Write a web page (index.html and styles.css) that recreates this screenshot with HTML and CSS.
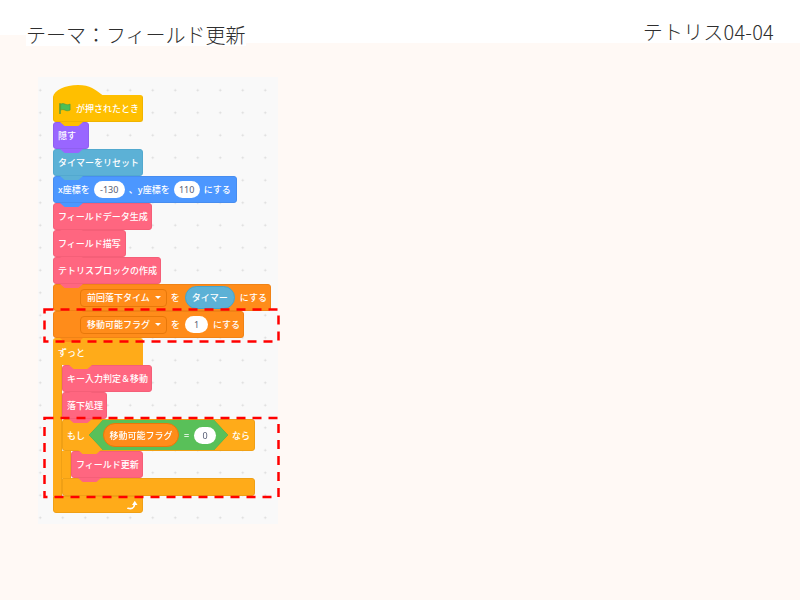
FILE: index.html
```html
<!DOCTYPE html>
<html lang="ja">
<head>
    <meta charset="UTF-8">
    <meta name="viewport" content="width=device-width, initial-scale=1.0">
    <title>テトリス04-04</title>
    <link rel="stylesheet" href="styles.css">
</head>
<body>
    <header class="header">
        <div class="header-notch"></div>
        <h1 class="title">テーマ：フィールド更新</h1>
        <div class="page-no">テトリス04-04</div>
    </header>

    <main class="main">
        <div class="workspace">
            <div class="stack">
                <div class="block hat w-90">
                    <svg class="flag" viewBox="0 0 12 11" width="12" height="11">
                        <path d="M1 .8v9.700" stroke="#45993d" stroke-width="1.400" stroke-linecap="round"/>
                        <path d="M1.600 1.200c1.800-1 3.200-.6 4.600 0s2.800.8 4.900-.1v6c-2 1-3.500.7-4.900.1s-2.800-1-4.600-.1z" fill="#4cbf56" stroke="#45993d" stroke-width=".6"/>
                    </svg>
                    <span>が押されたとき</span>
                </div>
                <div class="block looks w-36"><span>隠す</span></div>
                <div class="block sensing w-90"><span>タイマーをリセット</span></div>
                <div class="block motion w-184">
                    <span>x座標を</span>
                    <span class="num num-wide">-130</span>
                    <span>、y座標を</span>
                    <span class="num num-mid">110</span>
                    <span>にする</span>
                </div>
                <div class="block custom w-99"><span>フィールドデータ生成</span></div>
                <div class="block custom w-73"><span>フィールド描写</span></div>
                <div class="block custom w-108"><span>テトリスブロックの作成</span></div>
                <div class="block variable w-218">
                    <span class="dropdown">前回落下タイム</span>
                    <span>を</span>
                    <span class="reporter reporter-blue">タイマー</span>
                    <span>にする</span>
                </div>
                <div class="block variable w-191">
                    <span class="dropdown">移動可能フラグ</span>
                    <span>を</span>
                    <span class="num num-one">1</span>
                    <span>にする</span>
                </div>

                <div class="c-block control">
                    <div class="c-head w-90"><span>ずっと</span></div>
                    <div class="c-body">
                        <div class="c-arm"></div>
                        <div class="c-inner">
                            <div class="block custom w-90"><span>キー入力判定＆移動</span></div>
                            <div class="block custom w-45"><span>落下処理</span></div>
                            <div class="c-block control">
                                <div class="c-head if-head w-193">
                                    <span>もし</span>
                                    <div class="condition-edge">
                                        <div class="condition">
                                            <span class="reporter reporter-orange">移動可能フラグ</span>
                                            <span>=</span>
                                            <span class="num num-small">0</span>
                                        </div>
                                    </div>
                                    <span>なら</span>
                                </div>
                                <div class="c-body">
                                    <div class="c-arm"></div>
                                    <div class="c-inner">
                                        <div class="block custom w-72"><span>フィールド更新</span></div>
                                    </div>
                                </div>
                                <div class="c-foot if-foot w-193"></div>
                            </div>
                        </div>
                    </div>
                    <div class="c-foot forever-foot w-90">
                        <svg viewBox="0 0 11 10" width="11" height="10">
                            <path d="M1 8.300c3 1 6 .3 6.600-3.800" fill="none" stroke="#fff" stroke-width="1.700" stroke-linecap="round"/>
                            <path d="M5 5l2.800-4.300L10.500 5z" fill="#fff"/>
                        </svg>
                    </div>
                </div>
            </div>

            <!-- 赤の点線枠 -->
            <svg class="marks" width="244" height="447">
                <rect x="6.500" y="232.500" width="234" height="32"/>
                <rect x="6.500" y="341" width="234" height="79"/>
            </svg>
        </div>
    </main>
</body>
</html>
```

FILE: styles.css
```css
* {
    margin: 0;
    padding: 0;
    box-sizing: border-box;
}

body {
    width: 800px;
    height: 600px;
    overflow: hidden;
    background-color: #fff9f5;
    font-family: 'Noto Sans CJK JP', sans-serif;
}

.header {
    position: relative;
    display: flex;
    justify-content: space-between;
    height: 43px;
    padding: 0 26px 0 26px;
    background-color: #fff;
    color: #2e2e2e;
}

/* 左端だけ背景色が少し上まで来ている */
.header-notch {
    position: absolute;
    left: 0;
    top: 35px;
    width: 26px;
    height: 8px;
    background-color: #fff9f5;
}

.title {
    height: 46px;
    padding-top: 20px;
    background-color: #fff;
    font-size: 20px;
    font-weight: 300;
    line-height: 29px;
}

.page-no {
    padding-top: 17px;
    font-size: 20px;
    font-weight: 300;
    line-height: 29px;
    letter-spacing: .2px;
}

.main {
    padding: 34px 0 0 38px;
}

.workspace {
    position: relative;
    width: 240px;
    height: 447px;
    padding: 18px 0 0 15px;
    background-color: #f9f9f9;
    background-image: radial-gradient(circle, #d9d9d9 .8px, transparent 1.2px);
    background-size: 22.5px 22.5px;
    background-position: -9px 2px;
}

.marks {
    position: absolute;
    left: 0;
    top: 0;
    z-index: 3;
}

.marks rect {
    fill: none;
    stroke: #f00;
    stroke-width: 2.5;
    stroke-dasharray: 9 7;
}

/* ブロック */
.stack, .c-inner {
    display: flex;
    flex-direction: column;
    align-items: flex-start;
}

.block, .c-head {
    position: relative;
    display: flex;
    align-items: center;
    gap: 4px;
    height: 27px;
    padding-left: 4px;
    border: 1px solid;
    border-radius: 3px;
    color: #fff;
    font-size: 9px;
    font-weight: 500;
    white-space: nowrap;
}

.block::after, .c-head::after {
    content: '';
    position: absolute;
    left: 6px;
    bottom: -5px;
    z-index: 1;
    width: 23px;
    height: 4px;
    background-color: inherit;
    clip-path: polygon(0 0, 100% 0, 80% 100%, 20% 100%);
}

.w-36 { width: 36px; }
.w-45 { width: 45px; }
.w-72 { width: 72px; }
.w-73 { width: 73px; }
.w-90 { width: 90px; }
.w-99 { width: 99px; }
.w-108 { width: 108px; }
.w-184 { width: 184px; }
.w-191 { width: 191px; }
.w-193 { width: 193px; }
.w-218 { width: 218px; }

.hat {
    background-color: #ffbf00;
    border-color: #f0b400;
    border-top-color: #ffbf00;
    padding-left: 5px;
    gap: 5px;
}

.hat::before {
    content: '';
    position: absolute;
    left: -1px;
    top: -11px;
    width: 56px;
    height: 12px;
    background-color: #ffbf00;
    clip-path: path('M0 12 C1 5 12 0 25 0 C37 0 43 5 48 9 C50 11 53 11 56 12 Z');
}

.flag {
    flex-shrink: 0;
}

.looks { background-color: #9966ff; border-color: #8f60f0; }
.sensing { background-color: #5cb1d6; border-color: #52a9cf; }
.motion { background-color: #4c97ff; border-color: #478df0; }
.custom { background-color: #ff6680; border-color: #f55f78; }

.variable {
    background-color: #ff8c1a;
    border-color: #f08316;
    padding-left: 26px;
}

.num {
    display: flex;
    justify-content: center;
    align-items: center;
    height: 17px;
    border-radius: 9px;
    background-color: #fff;
    color: #575e75;
    font-family: 'Noto Sans', sans-serif;
    font-weight: 400;
}

.num-wide { width: 31px; }
.num-mid { width: 26px; }
.num-one { width: 23px; margin-left: 1px; margin-right: 1px; }
.num-small { width: 22px; }

.dropdown {
    display: flex;
    align-items: center;
    gap: 5px;
    height: 18px;
    padding: 0 5px 0 6px;
    border: 1px solid #e8780a;
    border-radius: 4px;
}

.dropdown::after {
    content: '';
    border-top: 3px solid #fff;
    border-left: 3px solid transparent;
    border-right: 3px solid transparent;
}

.reporter {
    display: flex;
    align-items: center;
    justify-content: center;
    border: 1px solid;
    border-radius: 12px;
}

.reporter-blue {
    width: 50px;
    height: 23px;
    margin-left: 1px;
    margin-right: 1px;
    background-color: #5cb1d6;
    border-color: #47a3cb;
}

.reporter-orange {
    width: 76px;
    height: 24px;
    background-color: #ff8c1a;
    border-color: #e8780a;
}

/* ずっと / もし */
.control {
    color: #fff;
}

.c-head {
    background-color: #ffab19;
    border-color: #ffab19;
    border-bottom: 0;
    border-radius: 3px 3px 0 0;
}

.c-head::after {
    left: 15px;
    bottom: -4px;
}

.c-body {
    display: flex;
}

.c-arm {
    width: 9px;
    background-color: #ffab19;
    border-right: 1px solid #f0a015;
}

.c-foot {
    position: relative;
    display: flex;
    justify-content: flex-end;
    align-items: center;
    background-color: #ffab19;
    border: 1px solid #f0a015;
    border-radius: 0 3px 3px 3px;
}

.if-head {
    height: 32px;
    border-radius: 3px;
    border-color: #f0a015;
    border-bottom: 1px solid #f0a015;
}

.if-foot {
    height: 18px;
}

.if-foot::after {
    content: '';
    position: absolute;
    left: 6px;
    bottom: -5px;
    z-index: 1;
    width: 23px;
    height: 4px;
    background-color: #ffab19;
    clip-path: polygon(0 0, 100% 0, 80% 100%, 20% 100%);
}

.forever-foot {
    height: 17px;
    padding-right: 4px;
}

.condition-edge {
    filter: drop-shadow(0 0 .6px #389438);
}

.condition {
    display: flex;
    align-items: center;
    gap: 5px;
    width: 139px;
    height: 30px;
    padding-left: 14px;
    background-color: #59c059;
    clip-path: polygon(14px 0, calc(100% - 14px) 0, 100% 50%, calc(100% - 14px) 100%, 14px 100%, 0 50%);
}
```
